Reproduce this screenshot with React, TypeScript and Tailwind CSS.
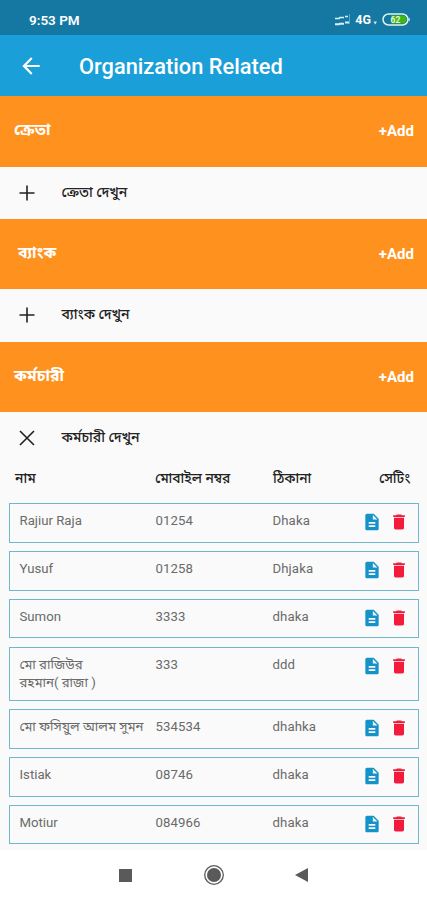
import { MdArrowBack, MdDelete, MdDescription } from "react-icons/md";

interface Employee {
  name: string;
  mobile: string;
  address: string;
  tall?: boolean;
}

const employees: Employee[] = [
  { name: "Rajiur Raja", mobile: "01254", address: "Dhaka" },
  { name: "Yusuf", mobile: "01258", address: "Dhjaka" },
  { name: "Sumon", mobile: "3333", address: "dhaka" },
  { name: "মো রাজিউর\nরহমান( রাজা )", mobile: "333", address: "ddd", tall: true },
  { name: "মো ফসিয়ুল আলম সুমন", mobile: "534534", address: "dhahka" },
  { name: "Istiak", mobile: "08746", address: "dhaka" },
  { name: "Motiur", mobile: "084966", address: "dhaka" },
];

function StatusBar() {
  return (
    <div className="flex h-[35px] shrink-0 items-center justify-between bg-[#1478a3] pt-1 pr-[17px] pl-[29px] text-white">
      <span className="text-[13.5px] leading-4 font-semibold">9:53 PM</span>
      <div className="flex items-center">
        <svg width="17" height="14" viewBox="0 0 17 14" fill="none" stroke="#d9f1fa">
          <path d="M1 5.500h4l1-1h4M11 3.500h3" strokeWidth="1.6" />
          <path d="M1 11.200h4l1-.5h4M11 9.500h4" strokeWidth="2" />
          <path d="M15.500 1v10" strokeWidth="1" opacity=".35" />
        </svg>
        <span className="ml-[4px] text-[12.5px] leading-4 font-bold">4G</span>
        <svg className="mr-1 ml-0.5" width="5" height="12" viewBox="0 0 5 12">
          <path d="M.5 7.500h3.500L2.200 10.500z" fill="#cfeaf5" />
        </svg>
        <svg width="28" height="13" viewBox="0 0 28 13">
          <rect x="1" y="1" width="25" height="11" rx="5.500" fill="#1478a3" stroke="#dff3e8" strokeWidth="1.5" />
          <path d="M9.500 2.500H20.500a4 4 0 0 1 0 8H9.500z" fill="#3fb618" />
          <text x="13.500" y="9.700" textAnchor="middle" fontSize="8.500" fontWeight="700" fill="#e6f7dc">
            62
          </text>
          <path d="M27.200 5v3" stroke="#dff3e8" strokeWidth="1" />
        </svg>
      </div>
    </div>
  );
}

function Toolbar() {
  return (
    <header className="flex h-[61px] shrink-0 items-center bg-[#1a9fd9] pl-[18px] text-white">
      <MdArrowBack size={26} />
      <h1 className="ml-[35px] pt-0.5 text-[21.8px] leading-7 font-medium">Organization Related</h1>
    </header>
  );
}

function SectionHeader({ title, indent }: { title: string; indent?: boolean }) {
  return (
    <div
      className={`flex h-[70.5px] items-center justify-between bg-[#ff921f] pr-[13px] text-white ${indent ? "pl-[18px]" : "pl-[14px]"}`}
    >
      <span className="pb-0.5 text-[15.8px] leading-5 font-bold">{title}</span>
      <span className="text-[15px] leading-5 font-bold">+Add</span>
    </div>
  );
}

function SectionToggle({ label, open }: { label: string; open?: boolean }) {
  return (
    <div className="flex h-[52.250px] items-center pl-[18.5px]">
      <svg width="16" height="16" viewBox="0 0 16 16" stroke="#222" strokeWidth="1.6">
        {open ? <path d="M1 1l14 14M15 1L1 15" /> : <path d="M8 .5v15M.5 8h15" />}
      </svg>
      <span className="ml-[27px] pb-0.5 text-[14px] leading-5 font-medium text-[#222]">{label}</span>
    </div>
  );
}

function EmployeeRow({ employee }: { employee: Employee }) {
  return (
    <div
      className={`flex border border-[#6fb9cb] pt-2 pl-[9.5px] text-[13.2px] leading-[18px] text-[#6a6a6a] ${employee.tall ? "h-[54.500px]" : "h-[39.500px]"}`}
    >
      <div className="w-[136px] whitespace-pre">{employee.name}</div>
      <div className="w-[117px] tracking-[0.1px]">{employee.mobile}</div>
      <div className="w-[89px] tracking-[0.1px]">{employee.address}</div>
      <div className="flex gap-[7px]">
        <MdDescription size={20} className="text-[#1593c8]" />
        <MdDelete size={20} className="text-[#f31b3c]" />
      </div>
    </div>
  );
}

function NavigationBar() {
  return (
    <nav className="flex h-[50px] shrink-0 items-center bg-white pl-[119px]">
      <svg width="13" height="13">
        <rect width="13" height="13" fill="#5a5a5a" />
      </svg>
      <svg className="ml-[71px]" width="22" height="22" viewBox="0 0 22 22">
        <circle cx="11" cy="11" r="9.300" fill="none" stroke="#5a5a5a" strokeWidth="1.3" />
        <circle cx="11" cy="11" r="7" fill="#5a5a5a" />
      </svg>
      <svg className="ml-[70px]" width="13" height="14" viewBox="0 0 13 14">
        <path d="M13 0v14L0 7z" fill="#5a5a5a" />
      </svg>
    </nav>
  );
}

export default function App() {
  return (
    <div className="flex h-[900px] w-[427px] flex-col overflow-hidden bg-[#fafafa] font-['Roboto','Noto_Sans_Bengali','Noto_Sans',sans-serif]">
      <StatusBar />
      <Toolbar />
      <main className="h-[754px] shrink-0">
        <SectionHeader title="ক্রেতা" />
        <SectionToggle label="ক্রেতা দেখুন" />
        <SectionHeader title="ব্যাংক" indent />
        <SectionToggle label="ব্যাংক দেখুন" />
        <SectionHeader title="কর্মচারী" />
        <SectionToggle label="কর্মচারী দেখুন" open />
        <div className="flex h-[39px] pt-1 pl-[15px] text-[13.8px] leading-5 font-medium text-[#222]">
          <div className="w-[140px]">নাম</div>
          <div className="w-[118px]">মোবাইল নম্বর</div>
          <div className="w-[106px]">ঠিকানা</div>
          <div>সেটিং</div>
        </div>
        <div className="flex flex-col gap-[8.250px] pr-2 pl-[9px]">
          {employees.map((employee) => (
            <EmployeeRow key={employee.mobile} employee={employee} />
          ))}
        </div>
      </main>
      <NavigationBar />
    </div>
  );
}
